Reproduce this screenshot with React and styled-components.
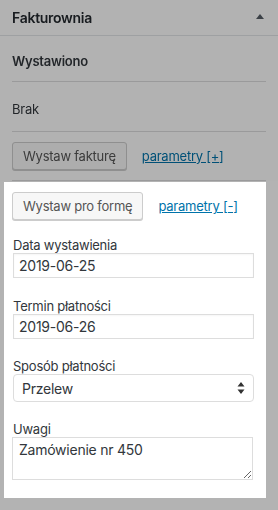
import React from "react";
import styled, { createGlobalStyle } from "styled-components";

const GlobalStyle = createGlobalStyle`
  html, body {
    margin: 0;
    padding: 0;
    background: #b3b3b3;
  }
  body {
    font-family: Inter, "Noto Sans", sans-serif;
    letter-spacing: -0.015em;
    color: #23282d;
    -webkit-font-smoothing: antialiased;
  }
`;

const Page = styled.div`
  width: 278px;
  height: 510px;
  overflow: hidden;
  display: flex;
  flex-direction: column;
`;

const Dimmed = styled.div`
  background: #fff;
  filter: brightness(0.7);
  display: flex;
  flex-direction: column;
`;

const Header = styled.div`
  height: 35px;
  display: flex;
  align-items: center;
  justify-content: space-between;
  padding: 0 14px 0 12px;
  border-bottom: 1px solid #e2e4e7;
`;

const Title = styled.h2`
  margin: 0;
  font-size: 14px;
  font-weight: 600;
  letter-spacing: -0.02em;
  color: #23282d;
`;

const Toggle = styled.span`
  width: 0;
  height: 0;
  border-left: 4px solid transparent;
  border-right: 4px solid transparent;
  border-bottom: 5px solid #555d66;
  margin-top: -2px;
`;

const Rows = styled.div`
  padding: 0 12px;
  display: flex;
  flex-direction: column;
`;

const Row = styled.div`
  height: ${(p) => p.h}px;
  padding-top: ${(p) => p.pt ?? 0}px;
  display: flex;
  align-items: center;
  gap: 15px;
  border-bottom: 1px solid #dcdcde;
  font-size: 13px;
  font-weight: ${(p) => (p.bold ? 600 : 400)};
  color: #32373c;
  box-sizing: border-box;
`;

const Button = styled.button`
  height: 28px;
  padding: 0 10px;
  font-family: inherit;
  font-size: 13px;
  letter-spacing: inherit;
  color: #555;
  background: #f7f7f7;
  border: 1px solid #ccc;
  border-radius: 3px;
  box-shadow: 0 1px 0 #ccc;
  cursor: pointer;
`;

const Link = styled.a`
  font-size: 13px;
  color: #0073aa;
  text-decoration: underline;
`;

const Panel = styled.div`
  margin: 1px 12px 0 4px;
  background: #fff;
  padding: 10px 8px 18px 8px;
  display: flex;
  flex-direction: column;
`;

const ButtonRow = styled.div`
  display: flex;
  align-items: center;
  gap: 15px;
  margin-bottom: 14px;
`;

const Field = styled.div`
  display: flex;
  flex-direction: column;
  margin-left: 1px;
  margin-bottom: ${(p) => p.mb ?? 17}px;
`;

const Label = styled.label`
  font-size: 13px;
  line-height: 18px;
  padding-top: 2px;
  margin-bottom: -2px;
  color: #32373c;
`;

const Input = styled.input`
  box-sizing: border-box;
  width: 241px;
  height: 25px;
  margin: 1px 0 0;
  padding: 0 5px;
  font-family: inherit;
  font-size: 14px;
  letter-spacing: inherit;
  color: #32373c;
  border: 1px solid #ddd;
  border-radius: 0;
  outline: none;
  box-shadow: inset 0 1px 2px rgba(0, 0, 0, 0.04);
`;

const Select = styled.select`
  box-sizing: border-box;
  width: 241px;
  height: 28px;
  margin: 1px 0 0;
  padding: 0 8px;
  font-family: inherit;
  font-size: 14px;
  letter-spacing: inherit;
  color: #32373c;
  background: #fff
    url("data:image/svg+xml,%3Csvg xmlns='http://www.w3.org/2000/svg' width='8' height='12' viewBox='0 0 8 12'%3E%3Cpath d='M4 0L7.5 4.5H0.5Z M4 12L0.5 7.5H7.5Z' fill='%23333'/%3E%3C/svg%3E")
    no-repeat right 8px center;
  border: 1px solid #ddd;
  border-radius: 4px;
  appearance: none;
  outline: none;
`;

const TextArea = styled.textarea`
  box-sizing: border-box;
  width: 241px;
  height: 43px;
  margin: 1px 0 0 -1px;
  padding: 2px 6px;
  font-family: inherit;
  font-size: 14px;
  letter-spacing: inherit;
  line-height: 20px;
  color: #32373c;
  border: 1px solid #ddd;
  outline: none;
`;

export default function App() {
  return (
    <Page>
      <GlobalStyle />
      <Dimmed>
        <Header>
          <Title>Fakturownia</Title>
          <Toggle />
        </Header>
        <Rows>
          <Row h={46} pt={5} bold>Wystawiono</Row>
          <Row h={50} pt={4}>Brak</Row>
          <Row h={49}>
            <Button>Wystaw fakturę</Button>
            <Link href="#">parametry [+]</Link>
          </Row>
        </Rows>
      </Dimmed>
      <Panel>
        <ButtonRow>
          <Button>Wystaw pro formę</Button>
          <Link href="#">parametry [-]</Link>
        </ButtonRow>
        <Field>
          <Label>Data wystawienia</Label>
          <Input defaultValue="2019-06-25" />
        </Field>
        <Field mb={16}>
          <Label>Termin płatności</Label>
          <Input defaultValue="2019-06-26" />
        </Field>
        <Field mb={16}>
          <Label>Sposób płatności</Label>
          <Select defaultValue="przelew">
            <option value="przelew">Przelew</option>
          </Select>
        </Field>
        <Field mb={0}>
          <Label>Uwagi</Label>
          <TextArea defaultValue="Zamówienie nr 450" />
        </Field>
      </Panel>
    </Page>
  );
}
